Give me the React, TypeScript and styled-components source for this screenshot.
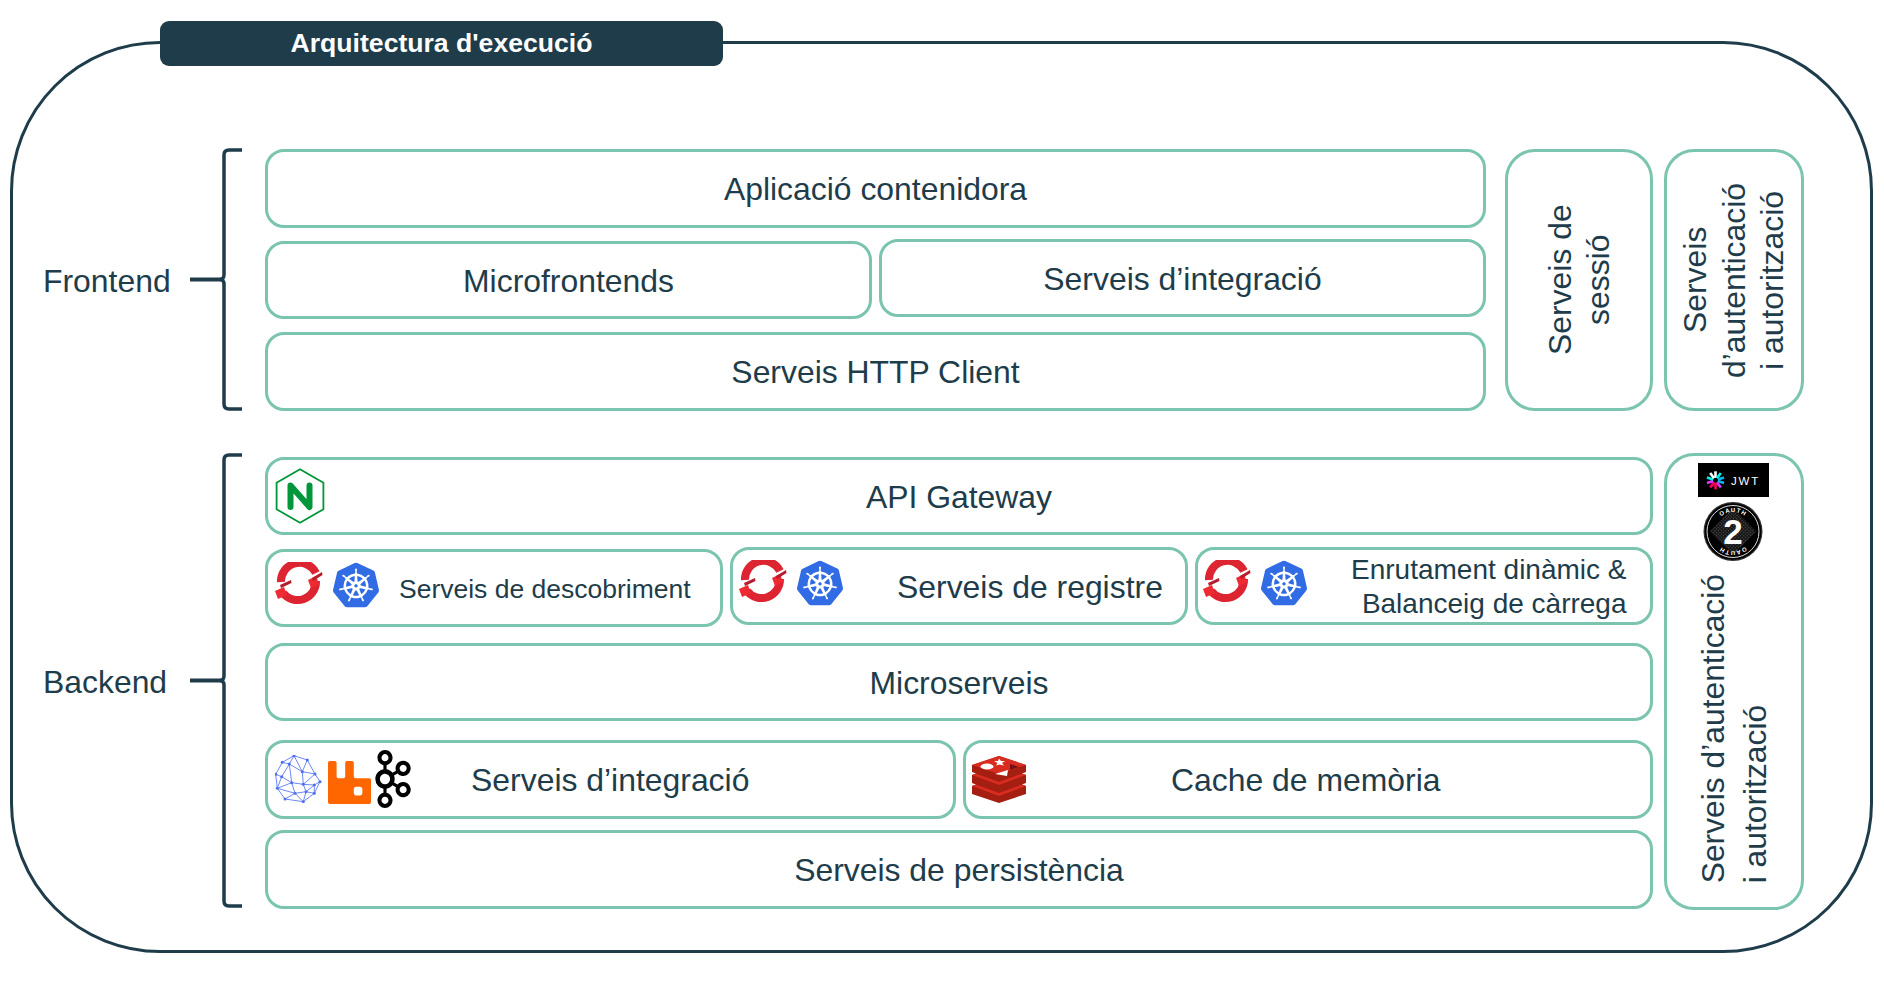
import React from 'react'
import styled, { createGlobalStyle } from 'styled-components'
import { SiApachekafka, SiKubernetes, SiRabbitmq } from 'react-icons/si'

const INK = '#1e3c4a'
const MINT = '#7bc4b0'

const GlobalStyle = createGlobalStyle`
  html, body {
    margin: 0;
    background: #fff;
    font-family: "Liberation Sans", Arial, sans-serif;
    color: ${INK};
  }
`

function Brace({ height, top }: { height: number; top: number }) {
  const mid = height / 2
  const end = height - 2
  return (
    <BraceSvg $top={top} width={55} height={height} viewBox={`0 0 55 ${height}`}>
      <path
        d={`M52 2 H39 Q34 2 34 7 V${mid - 5} Q34 ${mid} 30 ${mid} Q34 ${mid} 34 ${mid + 5} V${end - 5} Q34 ${end} 39 ${end} H52`}
        fill="none"
        stroke={INK}
        strokeWidth="3.5"
      />
      <path d={`M0 ${mid} H32`} stroke={INK} strokeWidth="4" />
    </BraceSvg>
  )
}

function NginxLogo() {
  return (
    <svg width="50" height="56" viewBox="0 0 50 56">
      <path d="M25 1.2 L48.4 14.7 V41.3 L25 54.8 L1.6 41.3 V14.7 Z" fill="#fff" stroke="#009639" strokeWidth="1.8" />
      <path d="M15.5 39 V17.5 L34.5 39 V17.5" fill="none" stroke="#009639" strokeWidth="6" strokeLinecap="round" strokeLinejoin="round" />
    </svg>
  )
}

function OpenShiftLogo() {
  return (
    <svg width="48" height="46" viewBox="0 0 48 46">
      <path d="M41 11 A18.5 18.5 0 0 0 6 20" fill="none" stroke="#dd2531" strokeWidth="8" />
      <path d="M8 31 A18.5 18.5 0 0 0 41 19" fill="none" stroke="#dd2531" strokeWidth="8" />
      <path d="M33 18 L41 14 L44 22 L36 26 Z" fill="#ee2b33" />
      <path d="M0 29 L9 25 L12 33 L3 37 Z" fill="#ee2b33" />
      <path d="M37 16 L47 10 L47.5 13 L38 19 Z" fill="#b51d2b" />
      <path d="M5 23 L16 18 L16.5 21 L6 26 Z" fill="#b51d2b" />
    </svg>
  )
}

function KubeLogo() {
  return <SiKubernetes size={46} color="#326ce5" />
}

const MESH_POINTS: [number, number][] = [
  [19, 0.7], [32.3, 5], [40, 19], [45, 26.7], [39.3, 38.3], [28.3, 46.7],
  [10, 44], [2.3, 33.3], [0.7, 19.3], [7.3, 7.3], [14.3, 9], [27.3, 16.7],
  [16.7, 27.7], [28.3, 29.3], [6.7, 21.7], [39.3, 30], [20, 38.3], [31, 36.7],
]
const MESH_LINES: [number, number][] = [
  [0, 1], [1, 2], [2, 3], [3, 4], [4, 5], [5, 6], [6, 7], [7, 8], [8, 9], [9, 0],
  [0, 10], [9, 10], [10, 11], [1, 11], [11, 2], [11, 13], [10, 12], [10, 14], [8, 14],
  [14, 12], [14, 7], [12, 7], [12, 13], [13, 15], [2, 13], [15, 3], [15, 4], [13, 17],
  [17, 4], [17, 5], [12, 16], [16, 7], [16, 6], [16, 5], [16, 17], [15, 17], [0, 11],
]

function MeshLogo() {
  return (
    <svg width="48" height="48" viewBox="0 0 48 48">
      {MESH_LINES.map(([a, b]) => (
        <line
          key={`${a}-${b}`}
          x1={MESH_POINTS[a][0]}
          y1={MESH_POINTS[a][1]}
          x2={MESH_POINTS[b][0]}
          y2={MESH_POINTS[b][1]}
          stroke="#5d7cf2"
          strokeWidth="0.9"
        />
      ))}
      {MESH_POINTS.map(([x, y]) => (
        <circle key={`${x}-${y}`} cx={x} cy={y} r="1.5" fill="#4f6ff0" />
      ))}
    </svg>
  )
}

function RedisLogo() {
  return (
    <svg width="56" height="48" viewBox="0 0 56 48">
      <path d="M1 30 L28 20 L55 30 V38 L28 47 L1 38 Z" fill="#a41e11" />
      <path d="M1 30 L28 40 L55 30 L28 20 Z" fill="#d82c20" />
      <path d="M1 19 L28 9 L55 19 V27 L28 37 L1 27 Z" fill="#a41e11" />
      <path d="M1 19 L28 29 L55 19 L28 9 Z" fill="#d82c20" />
      <path d="M1 9 L28 0 L55 9 V16 L28 26 L1 16 Z" fill="#a41e11" />
      <path d="M1 9 L28 18 L55 9 L28 0 Z" fill="#d82c20" />
      <ellipse cx="16" cy="10.5" rx="6.5" ry="3" fill="#fff" />
      <path d="M28 2.5 L30 5 L34 5 L31 7 L33 9.5 L28.5 8.5 L25 9.5 L26.5 7 L23 5 L27 5 Z" fill="#fff" />
      <path d="M24 18 L37 14 L36 20 Z" fill="#fff" />
      <path d="M39 8 L48 11 L39 14 Z" fill="#741113" />
    </svg>
  )
}

const JWT_RAYS = [
  ['#ffffff', 0], ['#00f2e6', 36], ['#00b9f1', 72], ['#00b9f1', 108], ['#d63aff', 144],
  ['#fb015b', 180], ['#fb015b', 216], ['#d63aff', 252], ['#00f2e6', 288], ['#ffffff', 324],
] as const

function JwtLogo() {
  return (
    <svg width="71" height="34" viewBox="0 0 71 34">
      <rect width="71" height="34" fill="#000" />
      <g transform="translate(17.5 17.3)">
        {JWT_RAYS.map(([color, angle]) => (
          <rect key={angle} x="-1.3" y="-9" width="2.6" height="6.6" fill={color} transform={`rotate(${angle})`} />
        ))}
      </g>
      <text x="33" y="21.5" fill="#fff" fontFamily="Liberation Sans" fontSize="11.5" letterSpacing="1.8">
        JWT
      </text>
    </svg>
  )
}

function OAuthLogo() {
  return (
    <svg width="60" height="61" viewBox="0 0 60 61">
      <defs>
        <pattern id="oauth-dots" width="2.4" height="2.4" patternUnits="userSpaceOnUse" patternTransform="rotate(45)">
          <rect width="2.4" height="2.4" fill="#111" />
          <rect width="1.2" height="1.2" fill="#555" />
        </pattern>
        <path id="oauth-top" d="M10.5 30.5 A19.5 19.5 0 0 1 49.5 30.5" />
        <path id="oauth-bottom" d="M49.5 30.5 A19.5 19.5 0 0 1 10.5 30.5" />
      </defs>
      <circle cx="30" cy="30.5" r="29.5" fill="#333" />
      <circle cx="30" cy="30.5" r="28.3" fill="#000" />
      <circle cx="30" cy="30.5" r="26" fill="none" stroke="#ddd" strokeWidth="1" />
      <path d="M30 7 L53 30.5 L30 54 L7 30.5 Z" fill="url(#oauth-dots)" />
      <text fill="#fff" fontFamily="Liberation Sans" fontWeight="700" fontSize="6" letterSpacing="1">
        <textPath href="#oauth-top" startOffset="50%" textAnchor="middle">OAUTH</textPath>
      </text>
      <text fill="#fff" fontFamily="Liberation Sans" fontWeight="700" fontSize="6" letterSpacing="1">
        <textPath href="#oauth-bottom" startOffset="50%" textAnchor="middle">OAUTH</textPath>
      </text>
      <text x="30" y="42.5" textAnchor="middle" fill="#fff" fontFamily="Liberation Sans" fontWeight="700" fontSize="35">
        2
      </text>
    </svg>
  )
}

export default function App() {
  return (
    <>
      <GlobalStyle />
      <Frame>
        <TitleTab>Arquitectura d'execució</TitleTab>

        <Section>
          <SideLabel>Frontend</SideLabel>
          <Brace height={263} top={-1} />
          <MainColumn $width={1221}>
            <Box $height={79}>Aplicació contenidora</Box>
            <Row $top={13}>
              <Box $grow>Microfrontends</Box>
              <Box $grow $lift={2}>Serveis d’integració</Box>
            </Row>
            <Box $height={79} $top={13}>Serveis HTTP Client</Box>
          </MainColumn>
          <SideBox $width={148} $line={38} $gap={19}>
            Serveis de
            <br />
            sessió
          </SideBox>
          <SideBox $width={140} $line={38.5} $gap={11}>
            Serveis
            <br />
            d’autenticació
            <br />
            i autorització
          </SideBox>
        </Section>

        <Section $top={42}>
          <SideLabel>Backend</SideLabel>
          <Brace height={455} top={0} />
          <MainColumn $width={1388} $inset={4}>
            <Box $height={78}>
              <LogoSlot $top={11}>
                <NginxLogo />
              </LogoSlot>
              API Gateway
            </Box>
            <Row $top={14}>
              <IconBox $small>
                <LogoGroup $pad={7}>
                  <OpenShiftLogo />
                  <KubeLogo />
                </LogoGroup>
                <BoxLabel $left={20}>Serveis de descobriment</BoxLabel>
              </IconBox>
              <IconBox $lift={2}>
                <LogoGroup $pad={6}>
                  <OpenShiftLogo />
                  <KubeLogo />
                </LogoGroup>
                <BoxLabel $left={54}>Serveis de registre</BoxLabel>
              </IconBox>
              <IconBox $medium $lift={2}>
                <LogoGroup $pad={5}>
                  <OpenShiftLogo />
                  <KubeLogo />
                </LogoGroup>
                <BoxLabel $right>
                  Enrutament dinàmic &amp;
                  <br />
                  Balanceig de càrrega
                </BoxLabel>
              </IconBox>
            </Row>
            <Box $height={78} $top={16}>Microserveis</Box>
            <Row $top={19} $tall>
              <Box $grow $height={79}>
                <LogoSlot $top={10}>
                  <LogoTrio>
                    <MeshLogo />
                    <RabbitIcon size={43} color="#ff6600" />
                    <KafkaIcon size={58} color="#000" />
                  </LogoTrio>
                </LogoSlot>
                Serveis d’integració
              </Box>
              <Box $grow $height={79}>
                <LogoSlot $top={16} $left={5}>
                  <RedisLogo />
                </LogoSlot>
                <BoxLabel $left={-4}>Cache de memòria</BoxLabel>
              </Box>
            </Row>
            <Box $height={79} $top={11}>Serveis de persistència</Box>
          </MainColumn>
          <AuthColumn>
            <AuthLogos>
              <JwtLogo />
              <OAuthLogo />
            </AuthLogos>
            <AuthText>
              Serveis d’autenticació
              <br />
              i autorització
            </AuthText>
          </AuthColumn>
        </Section>
      </Frame>
    </>
  )
}

/*---> Styles <---*/
const Frame = styled.div`
  position: relative;
  box-sizing: border-box;
  width: 1863px;
  height: 912px;
  margin: 41px 0 0 10px;
  padding: 105px 0 0 30px;
  border: 3px solid ${INK};
  border-radius: 150px;
`

const TitleTab = styled.div`
  position: absolute;
  top: -23px;
  left: 147px;
  width: 563px;
  height: 45px;
  border-radius: 9px;
  background: ${INK};
  color: #fff;
  font-size: 26.6px;
  font-weight: 700;
  line-height: 44px;
  text-align: center;
`

const Section = styled.div<{ $top?: number }>`
  display: flex;
  align-items: flex-start;
  margin-top: ${(p) => p.$top ?? 0}px;
`

const SideLabel = styled.div`
  width: 147px;
  align-self: center;
  flex: none;
  padding-top: 1px;
  font-size: 31.9px;
  line-height: 40px;
`

const BraceSvg = styled.svg<{ $top: number }>`
  display: block;
  flex: none;
  margin-top: ${(p) => p.$top}px;
  margin-right: 20px;
`

const MainColumn = styled.div<{ $width: number; $inset?: number }>`
  display: flex;
  flex-direction: column;
  flex: none;
  width: ${(p) => p.$width}px;
  margin-top: ${(p) => p.$inset ?? 0}px;
`

const Row = styled.div<{ $top: number; $tall?: boolean }>`
  display: flex;
  gap: 7px;
  height: ${(p) => (p.$tall ? 79 : 78)}px;
  margin-top: ${(p) => p.$top}px;
`

const Box = styled.div<{ $height?: number; $top?: number; $grow?: boolean; $lift?: number }>`
  position: relative;
  box-sizing: border-box;
  display: flex;
  align-items: center;
  justify-content: center;
  flex: ${(p) => (p.$grow ? '1 1 0' : 'none')};
  min-width: 0;
  height: ${(p) => p.$height ?? 78}px;
  margin-top: ${(p) => p.$top ?? -(p.$lift ?? 0)}px;
  padding-top: 2px;
  border: 3px solid ${MINT};
  border-radius: 19px;
  background: #fff;
  font-size: 31.9px;
`

const IconBox = styled(Box)<{ $small?: boolean; $medium?: boolean }>`
  justify-content: flex-start;
  flex: 1 1 0;
  padding: 2px 23.5px 0 0;
  font-size: ${(p) => (p.$small ? 26.5 : p.$medium ? 28 : 31.9)}px;
  line-height: 34px;
`

const LogoGroup = styled.div<{ $pad: number }>`
  display: flex;
  align-items: center;
  gap: 10px;
  flex: none;
  margin: -9px 0 0 ${(p) => p.$pad}px;
`

const BoxLabel = styled.div<{ $left?: number; $right?: boolean }>`
  margin-left: ${(p) => (p.$right ? 'auto' : `${p.$left ?? 0}px`)};
  text-align: ${(p) => (p.$right ? 'right' : 'left')};
  white-space: nowrap;
`

const LogoSlot = styled.div<{ $top: number; $left?: number }>`
  position: absolute;
  top: ${(p) => p.$top - 3}px;
  left: ${(p) => p.$left ?? 7}px;
  line-height: 0;
`

const LogoTrio = styled.div`
  display: flex;
  align-items: center;
  gap: 5px;
`

const RabbitIcon = styled(SiRabbitmq)`
  margin-top: 6px;
`

const KafkaIcon = styled(SiApachekafka)`
  margin-left: -12px;
`

const SideBox = styled.div<{ $width: number; $line: number; $gap: number }>`
  box-sizing: border-box;
  flex: none;
  display: flex;
  align-items: center;
  justify-content: center;
  width: ${(p) => p.$width}px;
  height: 262px;
  margin-left: ${(p) => p.$gap}px;
  border: 3px solid ${MINT};
  border-radius: 30px;
  font-size: 31.9px;
  line-height: ${(p) => p.$line}px;
  text-align: center;
  writing-mode: vertical-rl;
  transform: rotate(180deg);
  white-space: nowrap;
`

const AuthColumn = styled.div`
  box-sizing: border-box;
  flex: none;
  display: flex;
  flex-direction: column;
  align-items: center;
  width: 140px;
  height: 457px;
  margin-left: 11px;
  padding-top: 6px;
  border: 3px solid ${MINT};
  border-radius: 30px;
`

const AuthLogos = styled.div`
  display: flex;
  flex-direction: column;
  align-items: center;
  gap: 4px;
  margin-right: 2px;
  padding-top: 1px;
  line-height: 0;
`

const AuthText = styled.div`
  margin-top: auto;
  margin-bottom: 24px;
  font-size: 31.8px;
  line-height: 42px;
  writing-mode: vertical-rl;
  transform: rotate(180deg);
  white-space: nowrap;
`
